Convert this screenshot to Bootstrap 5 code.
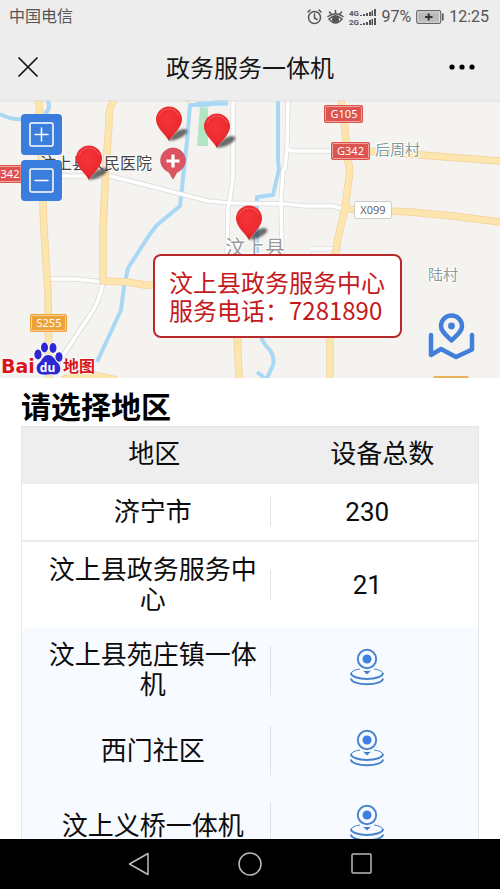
<!DOCTYPE html>
<html lang="zh-CN">
<head>
<meta charset="utf-8">
<meta name="viewport" content="width=device-width, initial-scale=1">
<title>政务服务一体机</title>
<link href="https://cdn.jsdelivr.net/npm/bootstrap@5.3.0/dist/css/bootstrap.min.css" rel="stylesheet">
<style>
  body { font-family: Roboto, "Noto Sans CJK SC", sans-serif; background: #fff; color: #0c0c0c; }
  svg { display: block; flex: none; }
  .top-area { background: #ededed; }
  .status-line { height: 34px; padding: 0 11px 0 9px; font-size: 16px; line-height: 24px; color: #555; }
  .status-icons { gap: 5px; }
  .title-line { height: 66px; padding: 0 17px; }
  .title-line h1 { font-size: 24px; line-height: 32px; font-weight: 400; color: #161616; }
  .bare-btn { border: 0; background: none; padding: 0; color: #111; }
  .title-btn { width: 34px; }
  .map-area { height: 278px; background: #f4f3f0; }
  .map-area .map-canvas { width: 100%; height: 100%; }
  .map-canvas text { font-family: "Noto Sans", "Noto Sans CJK SC", sans-serif; }
  .map-canvas .brand-latin { font-family: "DejaVu Sans", sans-serif; }
  .zoom-group { left: 21px; top: 14px; gap: 5px; }
  .zoom-btn { width: 41px; height: 41px; border: 0; border-radius: 4px; background: #3b7ddd; padding: 0 8px; }
  .info-box { left: 153px; top: 154px; border: 2px solid #b9292b; border-radius: 8px; background: #fff; color: #c5191c;
    padding: 12px 15px 12px 14px; font: 24px/28px "Noto Sans CJK SC", sans-serif; white-space: nowrap; }
  .locate-btn { right: 25px; top: 213px; }
  .content-area { padding: 12px 21px 0; min-height: 0; }
  .content-area h2 { font-size: 30px; line-height: 36px; font-weight: 700; margin: 0; color: #000; }
  .area-table { table-layout: fixed; border: 1px solid #e4e6e9; font-size: 26px; line-height: 30px; text-align: center; }
  .area-table .col-name { width: 58%; }
  .area-table th, .area-table td { padding: 0; font-weight: 400; vertical-align: middle; }
  .area-table thead tr { height: 57px; background: #eee; }
  .area-table th { padding-bottom: 2px; }
  .area-table .sum-row { height: 57px; border-bottom: 2px solid #ececee; }
  .area-table .group-row { height: 87px; }
  .area-table .site-row { height: 76px; background: #f7faff; }
  .area-table .site-row.tall { height: 85px; }
  .name-cell { padding: 0 16px 0 24px; }
  .name-cell::after { content: ""; width: 1px; height: 29px; margin-left: 10px; background: #dfe2e6; flex: none; }
  .site-row .name-cell::after { height: 49px; }
  .area-table td.value-cell { padding-right: 30px; }
  .system-nav { height: 50px; background: #000; flex: none; gap: 88px; }
</style>
<script src="https://cdn.jsdelivr.net/npm/bootstrap@5.3.0/dist/js/bootstrap.bundle.min.js"></script>
</head>
<body class="vh-100 d-flex flex-column overflow-hidden">

<header class="top-area flex-shrink-0">
  <div class="status-line d-flex align-items-center justify-content-between">
    <span>中国电信</span>
    <div class="status-icons d-flex align-items-center">
      <svg width="15" height="16" viewBox="0 0 15 16" fill="none" stroke="#555" stroke-width="1.5" stroke-linecap="round"><circle cx="7.500" cy="8.500" r="6"/><path d="M7.500 5v4l2.500 1.500M1 3l2-2M14 3l-2-2"/></svg>
      <svg width="17" height="16" viewBox="0 0 17 16" fill="none" stroke="#555" stroke-width="1.500" stroke-linecap="round"><path d="M1 7.500Q8.500 2 16 7.500M2 10q6.500-6.500 13 0-6.500 8-13 0z"/><circle cx="8.500" cy="10" r="2.800" fill="#555"/><path d="M8.500 4V1.500M4 5L2.500 3M13 5l1.500-2"/></svg>
      <svg width="27" height="17" viewBox="0 0 27 17" fill="#555"><text x="0" y="7" font-size="8" font-weight="700" font-family="Roboto, sans-serif">4G</text><text x="0" y="16" font-size="8" font-weight="700" font-family="Roboto, sans-serif">2G</text><path d="M11 6h2v1h-2zM14 5h2v2h-2zM17 4h2v3h-2zM20 3h2v4h-2zM22.500 1.500h1.500v5.500h-1.500zM25 0h2v7h-2zM11 15h2v1h-2zM14 14h2v2h-2zM17 13h2v3h-2zM20 11h2v5h-2zM22.500 10h1.500v6h-1.500zM25 9h2v7h-2z"/></svg>
      <span>97%</span>
      <svg width="28" height="14" viewBox="0 0 28 14"><rect x=".7" y=".7" width="24" height="12.600" rx="1.500" fill="#ededed" stroke="#666" stroke-width="1.200"/><rect x="2.200" y="2.200" width="21" height="9.600" fill="#bbb"/><path d="M26 3.500h1.600v7H26z" fill="#555"/><path d="M12.700 3.500v7M9 7h7.500" stroke="#333" stroke-width="2"/></svg>
      <span>12:25</span>
    </div>
  </div>
  <div class="title-line d-flex align-items-center justify-content-between">
    <button class="bare-btn title-btn" type="button" aria-label="关闭"><svg width="22" height="22" viewBox="0 0 22 22" stroke="#111" stroke-width="1.700" stroke-linecap="round"><path d="M2 2l18 18M20 2L2 20"/></svg></button>
    <h1 class="m-0 pt-1">政务服务一体机</h1>
    <button class="bare-btn title-btn" type="button" aria-label="更多"><svg width="26" height="8" viewBox="0 0 26 8" fill="#000"><circle cx="3" cy="4" r="2.600"/><circle cx="13" cy="4" r="2.600"/><circle cx="23" cy="4" r="2.600"/></svg></button>
  </div>
</header>

<section class="map-area position-relative overflow-hidden flex-shrink-0" aria-label="地图">
  <svg class="map-canvas" viewBox="0 100 500 278" preserveAspectRatio="xMinYMin slice">
    <defs>
      <radialGradient id="pinRed" cx=".45" cy=".35" r=".7"><stop offset="0" stop-color="#f4343a"/><stop offset=".7" stop-color="#ea2a2d"/><stop offset="1" stop-color="#b9151a"/></radialGradient>
      <filter id="soft"><feGaussianBlur stdDeviation="1.200"/></filter>
      <g id="pin">
        <path d="M0 0Q4-10 14-12 21-12 17-7 10-1 0 0z" fill="#222" opacity=".65" filter="url(#soft)"/>
        <path d="M0 0C-3-6-13-13-13-21.500A13 13 0 0 1 13-21.500C13-13 3-6 0 0z" fill="url(#pinRed)"/>
        <path d="M-10-25Q-7-32 0-32 7-32 10-25" fill="none" stroke="#ff8a8a" stroke-width="1" opacity=".5"/>
      </g>
      <g id="whiteRoads">
        <path d="M0 176H110L150 186 208 201 230 203 285 204 305 206 333 206 343 209"/>
        <path d="M233 101V178L230 198 228 208 227 256M288 101L287 148 285 168 283 171 281 201 282 256M287 149L293 151H335M310 249H336"/>
        <path d="M50 279H76L103 282Q100 300 92 312T62 357"/>
      </g>
      <g id="mainRoads">
        <path d="M39 100L44 230 48 292 49 378M115 100Q108 105 109 124L106 165 103 230V281L127 282 145 285H160M237 330L239 378M330 330V378"/>
        <path d="M341 100L345 128 347 158Q351 168 349 178L345 208 338 238 334 262M365 151L420 155 500 161M345 209L410 212 453 216 500 222M62 380Q88 371 116 380M186 98L190 100"/>
      </g>
    </defs>
    <path d="M200 107L208 108V146H197z" fill="#b1e5c4"/>
    <g fill="none" stroke="#a9d8f5" stroke-linejoin="round">
      <path d="M0 114Q10 120 22 119M47 100Q52 107 45 114" stroke-width="4"/>
      <path d="M228 102L216 102 208 105 190 105 187 141 182 188 180 206 157 225 150 234 128 268 124 287 121 310 97 362" stroke-width="4"/>
      <path d="M196 104L228 103" stroke-width="5"/>
      <path d="M278 101V161L279 169 273 195 257 197V256" stroke-width="4"/>
      <path d="M260 334Q263 344 270 350 275 358 273 365L267 378M257 372L266 379" stroke-width="4"/>
    </g>
    <g fill="none" stroke-linejoin="round">
      <use href="#whiteRoads" stroke="#d9d9d9" stroke-width="5"/><use href="#whiteRoads" stroke="#fff" stroke-width="3.600"/>
      <use href="#mainRoads" stroke="#f5d19c" stroke-width="7.500"/><use href="#mainRoads" stroke="#fde5ae" stroke-width="6"/>
    </g>
    <path d="M0 101H500" stroke="#ddd"/>

    <g stroke="#fff" stroke-width="2" paint-order="stroke" fill="#444">
      <text x="40" y="169" font-size="16">汶上县人民医院</text>
      <text x="375" y="155" font-size="15" fill="#80999a">后周村</text>
      <text x="428" y="280" font-size="15" fill="#8b9d9c">陆村</text>
      <text x="225" y="255" font-size="20" fill="#999">汶上县</text>
    </g>
    <path d="M173 179L169 172A12.300 12.300 0 1 1 177 172z" fill="#dd5360" stroke="#c94955" stroke-width=".8"/>
    <path d="M173 154.500V167.500M166.500 161H179.500" stroke="#fff" stroke-width="3.200"/>

    <g font-size="11" text-anchor="middle" fill="#fff">
      <rect x="324" y="105" width="39" height="18" rx="2" fill="#dc5350"/><rect x="325.500" y="106.500" width="36" height="15" rx="1" fill="none" stroke="#f5b5b0" stroke-width=".8"/><text x="344" y="118">G105</text>
      <rect x="331" y="142" width="39" height="18" rx="2" fill="#dc5350"/><rect x="332.500" y="143.500" width="36" height="15" rx="1" fill="none" stroke="#f5b5b0" stroke-width=".8"/><text x="350.500" y="155">G342</text>
      <rect x="-10" y="165" width="33" height="18" rx="2" fill="#dc5350"/><rect x="-9" y="166.500" width="30" height="15" fill="none" stroke="#f5b5b0" stroke-width=".8"/><text x="10" y="178">342</text>
      <rect x="30" y="314" width="37" height="18" rx="2" fill="#eda23a"/><rect x="31.500" y="315.500" width="34" height="15" rx="1" fill="none" stroke="#fbdca5" stroke-width=".8"/><text x="49" y="327">S255</text>
      <rect x="354.500" y="201.500" width="37" height="17" rx="2" fill="#fff" stroke="#ccc"/><text x="373" y="214" fill="#666">X099</text>
      <rect x="433" y="376" width="36" height="18" rx="2" fill="#e6b35b"/>
    </g>

    <use href="#pin" x="89" y="180"/><use href="#pin" x="169" y="141"/><use href="#pin" x="217" y="148"/><use href="#pin" x="249" y="240"/>

    <g fill="#d8151b" font-weight="700" stroke="#fff" stroke-width="1.500" paint-order="stroke">
      <text class="brand-latin" x="1" y="373" font-size="19">Bai</text><text x="63" y="372" font-size="16">地图</text>
    </g>
    <g fill="#2b28d4" stroke="#fff" stroke-width="1.500" paint-order="stroke">
      <ellipse cx="38" cy="354.500" rx="3.600" ry="5"/><ellipse cx="44.500" cy="347.500" rx="3.500" ry="5"/><ellipse cx="53" cy="348" rx="3.500" ry="5"/><ellipse cx="59" cy="357" rx="3.600" ry="4.800"/>
      <path d="M48 355C43 355 42 361 39 363 35 366 36 374 42 374.500 46 375 50 374 54 374.500 61 375 62 367 58 363 55 361 54 355 48 355z"/>
    </g>
    <text x="47.500" y="371.500" font-size="12" font-weight="700" fill="#fff" text-anchor="middle">du</text>
  </svg>

  <div class="zoom-group position-absolute d-flex flex-column">
    <button class="zoom-btn" type="button" aria-label="放大"><svg width="25" height="25" viewBox="0 0 25 25" fill="none" stroke="#fff" stroke-width="1.500" stroke-linecap="round"><rect x="1" y="1" width="23" height="23" rx="1.500"/><path d="M6 12.500h13M12.500 6v13"/></svg></button>
    <button class="zoom-btn" type="button" aria-label="缩小"><svg width="25" height="25" viewBox="0 0 25 25" fill="none" stroke="#fff" stroke-width="1.500" stroke-linecap="round"><rect x="1" y="1" width="23" height="23" rx="1.500"/><path d="M6 12.500h13"/></svg></button>
  </div>
  <div class="info-box position-absolute">汶上县政务服务中心<br>服务电话：7281890</div>
  <button class="bare-btn locate-btn position-absolute" type="button" aria-label="定位"><svg width="47" height="47" viewBox="0 0 47 47" fill="none" stroke="#427fdb" stroke-width="4.500" stroke-linejoin="round" stroke-linecap="round"><path d="M23.500 27.500C18 22 13 18.500 13 13a10.500 10.500 0 0 1 21 0C34 18.500 29 22 23.500 27.500z"/><circle cx="23.500" cy="13" r="3.400" fill="#427fdb" stroke="none"/><path d="M3 22v20l10-6 15 8 16-7.500V22"/></svg></button>
</section>

<svg width="0" height="0" class="position-absolute" aria-hidden="true">
  <symbol id="sitePin" viewBox="0 0 36 38">
    <g fill="none" stroke="#4782cf">
      <path d="M2 25A16 6 0 0 0 34 25M2 30.500A16 5.800 0 0 0 34 30.500" stroke-width="2"/>
      <path d="M2 25.500Q3 22 11 21M34 25.500Q33 22 25 21" stroke-width="1"/>
      <circle cx="18" cy="11" r="9.200" stroke-width="1.900"/>
    </g>
    <circle cx="18" cy="11" r="4.500" fill="#3f7fe0"/>
    <path d="M14 22.500Q18 23.500 22 22.500L18 26.500z" fill="#3f79cb"/>
  </symbol>
</svg>

<main class="content-area flex-grow-1 overflow-hidden">
  <h2>请选择地区</h2>
  <table class="area-table w-100">
    <thead>
      <tr><th class="col-name" scope="col">地区</th><th scope="col">设备总数</th></tr>
    </thead>
    <tbody>
      <tr class="sum-row"><td><div class="name-cell d-flex align-items-center"><span class="flex-grow-1">济宁市</span></div></td><td class="value-cell">230</td></tr>
      <tr class="group-row"><td><div class="name-cell d-flex align-items-center"><span class="flex-grow-1">汶上县政务服务中心</span></div></td><td class="value-cell">21</td></tr>
      <tr class="site-row tall"><td><div class="name-cell d-flex align-items-center"><span class="flex-grow-1">汶上县苑庄镇一体机</span></div></td><td class="value-cell"><button class="bare-btn" type="button" aria-label="查看位置"><svg width="36" height="38"><use href="#sitePin"/></svg></button></td></tr>
      <tr class="site-row"><td><div class="name-cell d-flex align-items-center"><span class="flex-grow-1">西门社区</span></div></td><td class="value-cell"><button class="bare-btn" type="button" aria-label="查看位置"><svg width="36" height="38"><use href="#sitePin"/></svg></button></td></tr>
      <tr class="site-row"><td><div class="name-cell d-flex align-items-center"><span class="flex-grow-1">汶上义桥一体机</span></div></td><td class="value-cell"><button class="bare-btn" type="button" aria-label="查看位置"><svg width="36" height="38"><use href="#sitePin"/></svg></button></td></tr>
    </tbody>
  </table>
</main>

<nav class="system-nav d-flex align-items-center justify-content-center" aria-label="系统导航">
  <button class="bare-btn" type="button" aria-label="返回"><svg width="24" height="24" viewBox="0 0 24 24" fill="none" stroke="#bbb" stroke-width="1.500" stroke-linejoin="round"><path d="M22 1.500v21L3.500 12z"/></svg></button>
  <button class="bare-btn" type="button" aria-label="主页"><svg width="24" height="24" viewBox="0 0 24 24" fill="none" stroke="#bbb" stroke-width="1.500"><circle cx="12" cy="12" r="11"/></svg></button>
  <button class="bare-btn" type="button" aria-label="最近任务"><svg width="24" height="24" viewBox="0 0 24 24" fill="none" stroke="#bbb" stroke-width="1.500"><rect x="2" y="2" width="19" height="19" rx="1"/></svg></button>
</nav>
</body>
</html>
